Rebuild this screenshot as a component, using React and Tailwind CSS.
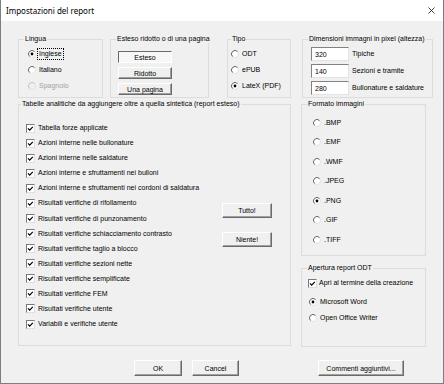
import React from "react";

const tabelle = [
	"Tabella forze applicate",
	"Azioni interne nelle bullonature",
	"Azioni interne nelle saldature",
	"Azioni interne e sfruttamenti nei bulloni",
	"Azioni interne e sfruttamenti nei cordoni di saldatura",
	"Risultati verifiche di rifollamento",
	"Risultati verifiche di punzonamento",
	"Risultati verifiche schiacciamento contrasto",
	"Risultati verifiche taglio a blocco",
	"Risultati verifiche sezioni nette",
	"Risultati verifiche semplificate",
	"Risultati verifiche FEM",
	"Risultati verifiche utente",
	"Variabili e verifiche utente",
];

const formati = [".BMP", ".EMF", ".WMF", ".JPEG", ".PNG", ".GIF", ".TIFF"];

const Radio = ({ checked, disabled }) => (
	<svg width="8" height="8" viewBox="0 0 8 8" className="shrink-0">
		<circle cx="4" cy="4" r="3.5" fill={disabled ? "#f0f0f0" : "#fff"} stroke="#e2e2e2" strokeWidth="1" />
		<path d="M1.5 6.5 A3.5 3.5 0 0 1 6.5 1.5" fill="none" stroke={disabled ? "#c4c4c4" : "#6e6e6e"} strokeWidth="1" />
		{checked && <circle cx="4" cy="4" r="1.4" fill="#000" />}
	</svg>
);

const Check = () => (
	<span className="flex items-center justify-center w-[9px] h-[9px] shrink-0 bg-white border border-t-[#7a7a7a] border-l-[#7a7a7a] border-b-[#dedede] border-r-[#dedede]">
		<svg width="7" height="7" viewBox="0 0 7 7">
			<path d="M1 3.4 L2.7 5.1 L5.8 1.8" fill="none" stroke="#000" strokeWidth="1.2" />
		</svg>
	</span>
);

const Btn = ({ children, pressed, className = "" }) => (
	<button
		className={`flex items-center justify-center leading-none whitespace-nowrap ${
			pressed
				? "bg-[#f7f7f7] border border-t-[#6b6b6b] border-l-[#6b6b6b] border-b-white border-r-white"
				: "bg-[#f0f0f0] border border-t-white border-l-white border-b-[#6b6b6b] border-r-[#6b6b6b] shadow-[inset_-1px_-1px_0_#a0a0a0]"
		} ${className}`}
	>
		{children}
	</button>
);

const Group = ({ label, labelMargin = "ml-[5px]", className = "", children }) => (
	<fieldset className={`border border-[#dcdcdc] min-w-0 ${className}`}>
		<legend className={`${labelMargin} px-[1px] leading-[8px] whitespace-nowrap`}>{label}</legend>
		{children}
	</fieldset>
);

const RadioRow = ({ label, checked, disabled, focus, className = "h-[16px]" }) => (
	<div className={`flex items-center gap-[3px] ${className}`}>
		<Radio checked={checked} disabled={disabled} />
		<span
			className={`${disabled ? "text-[#a3a3a3]" : ""} ${
				focus ? "outline outline-1 outline-dotted outline-black outline-offset-[1px]" : ""
			}`}
		>
			{label}
		</span>
	</div>
);

const Input = ({ value }) => (
	<input
		readOnly
		value={value}
		className="w-[38px] h-[14px] bg-white pl-[3px] text-[7px] leading-none outline-none border border-t-[#828282] border-l-[#828282] border-b-[#e3e3e3] border-r-[#e3e3e3]"
	/>
);

export default function App() {
	return (
		<div className="w-[444px] h-[384px] flex flex-col bg-[#f0f0f0] border-l border-r border-b border-[#7e7e7e] font-['Liberation_Sans',Arial,sans-serif] text-[7px] leading-[8px] text-black">
			{/* Title bar */}
			<div className="h-[21px] shrink-0 flex items-center justify-between bg-white pl-[5px] pr-[8px]">
				<span className="font-['Noto_Sans',sans-serif] text-[8px]">Impostazioni del report</span>
				<svg width="7" height="7" viewBox="0 0 7 7">
					<path d="M0.5 0.5 L6.5 6.5 M6.5 0.5 L0.5 6.5" stroke="#111" strokeWidth="0.8" />
				</svg>
			</div>

			{/* Row 1 */}
			<div className="flex pl-[17px] pt-[14px]">
				<Group label="Lingua" className="w-[85px] h-[63px]">
					<div className="flex flex-col pl-[9px] pt-[3px]">
						<RadioRow label="Inglese" checked focus />
						<RadioRow label="Italiano" />
						<RadioRow label="Spagnolo" disabled />
					</div>
				</Group>
				<Group label="Esteso ridotto o di una pagina" className="ml-[7px] w-[99px] h-[63px]">
					<div className="flex flex-col gap-[4px] pl-[7px] pt-[8px]">
						<Btn pressed className="w-[54px] h-[12px]">Esteso</Btn>
						<Btn className="w-[54px] h-[12px]">Ridotto</Btn>
						<Btn className="w-[54px] h-[12px]">Una pagina</Btn>
					</div>
				</Group>
				<Group label="Tipo" labelMargin="ml-[3px]" className="ml-[18px] w-[64px] h-[63px]">
					<div className="flex flex-col pl-[3px] pt-[3px]">
						<RadioRow label="ODT" />
						<RadioRow label="ePUB" />
						<RadioRow label="LateX (PDF)" checked />
					</div>
				</Group>
				<Group label="Dimensioni immagni in pixel (altezza)" className="ml-[11px] w-[131px] h-[63px]">
					<div className="flex flex-col gap-[3px] pl-[8px] pt-[4px]">
						{[
							["320", "Tipiche"],
							["140", "Sezioni e tramite"],
							["280", "Bullonature e saldature"],
						].map(([v, l]) => (
							<div key={l} className="flex items-center gap-[3px]">
								<Input value={v} />
								<span>{l}</span>
							</div>
						))}
					</div>
				</Group>
			</div>

			{/* Row 2 */}
			<div className="flex pl-[17px] mt-[2px]">
				<Group
					label="Tabelle analitiche da aggiungere oltre a quella sintetica (report esteso)"
					labelMargin="ml-[2px]"
					className="w-[273px] h-[246px]"
				>
					<div className="flex">
						<div className="flex flex-col pl-[7px] pt-[12.5px]">
							{tabelle.map((t) => (
								<div key={t} className="flex items-center gap-[3px] h-[15.08px]">
									<Check />
									<span>{t}</span>
								</div>
							))}
						</div>
						<div className="flex flex-col gap-[14px] ml-auto mr-[18px] mt-[95px]">
							<Btn className="w-[50px] h-[15px]">Tutto!</Btn>
							<Btn className="w-[50px] h-[15px]">Niente!</Btn>
						</div>
					</div>
				</Group>

				<div className="flex flex-col ml-[10px] w-[125px]">
					<Group label="Formato immagini" className="h-[156px]">
						<div className="flex flex-col pl-[11px] pt-[5px]">
							{formati.map((f) => (
								<RadioRow key={f} label={f} checked={f === ".PNG"} className="h-[19.5px]" />
							))}
						</div>
					</Group>
					<Group label="Apertura report ODT" className="mt-[8px] h-[83px]">
						<div className="flex flex-col pt-[3.5px]">
							<div className="flex items-center gap-[2px] h-[15px] pl-[6px]">
								<Check />
								<span>Apri al termine della creazione</span>
							</div>
							<div className="flex flex-col pl-[7px] mt-[3px]">
								<RadioRow label="Microsoft Word" checked />
								<RadioRow label="Open Office Writer" />
							</div>
						</div>
					</Group>
				</div>
			</div>

			{/* Bottom buttons */}
			<div className="flex pl-[133px] mt-[13px]">
				<Btn className="w-[48px] h-[16px]">OK</Btn>
				<Btn className="ml-[10px] w-[47px] h-[16px]">Cancel</Btn>
				<Btn className="ml-[79px] w-[86px] h-[16px]">Commenti aggiuntivi...</Btn>
			</div>
		</div>
	);
}
